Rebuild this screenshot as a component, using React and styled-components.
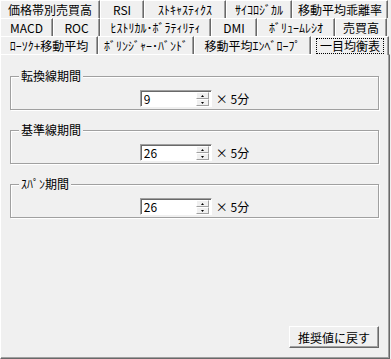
import React, { useState } from 'react';
import styled, { createGlobalStyle } from 'styled-components';

const GlobalStyle = createGlobalStyle`
  html, body {
    margin: 0;
    padding: 0;
    background: #f0f0f0;
  }
  * {
    box-sizing: border-box;
  }
`;

const tabRows = [
  [
    { label: '価格帯別売買高', width: 100 },
    { label: 'RSI', width: 44 },
    { label: 'ｽﾄｷｬｽﾃｨｸｽ', width: 82 },
    { label: 'ｻｲｺﾛｼﾞｶﾙ', width: 66 },
    { label: '移動平均乖離率', width: 96 },
  ],
  [
    { label: 'MACD', width: 53 },
    { label: 'ROC', width: 47 },
    { label: 'ﾋｽﾄﾘｶﾙ･ﾎﾞﾗﾃｨﾘﾃｨ', width: 111 },
    { label: 'DMI', width: 46 },
    { label: 'ﾎﾞﾘｭｰﾑﾚｼｵ', width: 78 },
    { label: '売買高', width: 52 },
  ],
  [
    { label: 'ﾛｰｿｸ+移動平均', width: 98 },
    { label: 'ﾎﾞﾘﾝｼﾞｬｰ･ﾊﾞﾝﾄﾞ', width: 96 },
    { label: '移動平均ｴﾝﾍﾞﾛｰﾌﾟ', width: 117 },
    { label: '一目均衡表', width: 78 },
  ],
];

const periods = [
  { title: '転換線期間', value: 9 },
  { title: '基準線期間', value: 26 },
  { title: 'ｽﾊﾟﾝ期間', value: 26 },
];

const defaults = periods.map(p => p.value);

export default function App() {
  const [selected, setSelected] = useState('一目均衡表');
  const [values, setValues] = useState(defaults);

  const onChangeValue = (index, next) => {
    setValues(prev => prev.map((v, i) => (i === index ? next : v)));
  };

  return (
    <>
      <GlobalStyle />
      <Window>
        <TabControl>
          {tabRows.map((row, r) => (
            <TabRow key={r}>
              {row.map(tab => (
                <Tab
                  key={tab.label}
                  $width={tab.width}
                  $active={tab.label === selected}
                  onClick={() => setSelected(tab.label)}
                >
                  {tab.label === selected ? (
                    <FocusLabel>{tab.label}</FocusLabel>
                  ) : (
                    tab.label
                  )}
                </Tab>
              ))}
            </TabRow>
          ))}
          <Panel>
            <GroupList>
              {periods.map((p, i) => (
                <Group key={p.title}>
                  <GroupTitle>{p.title}</GroupTitle>
                  <SpinRow>
                    <SpinBox>
                      <SpinInput
                        value={values[i]}
                        onChange={e => onChangeValue(i, e.target.value)}
                      />
                      <SpinButtons>
                        <SpinButton onClick={() => onChangeValue(i, Number(values[i]) + 1)}>
                          <Arrow viewBox="0 0 3 2" width="3" height="2">
                            <path d="M0 2 L1.5 0 L3 2 Z" fill="#000" />
                          </Arrow>
                        </SpinButton>
                        <SpinButton onClick={() => onChangeValue(i, Number(values[i]) - 1)}>
                          <Arrow viewBox="0 0 3 2" width="3" height="2">
                            <path d="M0 0 L3 0 L1.5 2 Z" fill="#000" />
                          </Arrow>
                        </SpinButton>
                      </SpinButtons>
                    </SpinBox>
                    <Unit>× 5分</Unit>
                  </SpinRow>
                </Group>
              ))}
            </GroupList>
            <ButtonRow>
              <ResetButton onClick={() => setValues(defaults)}>推奨値に戻す</ResetButton>
            </ButtonRow>
          </Panel>
        </TabControl>
      </Window>
    </>
  );
}

const Window = styled.div`
  width: 391px;
  height: 359px;
  overflow: hidden;
  background: #f0f0f0;
  font-family: 'Noto Sans CJK JP', 'Noto Sans', sans-serif;
  font-size: 12px;
  color: #000;
`;

const TabControl = styled.div`
  display: flex;
  flex-direction: column;
  width: 390px;
  height: 359px;
`;

const TabRow = styled.div`
  display: flex;
  height: 18px;
  position: relative;
  z-index: 1;
`;

const Tab = styled.div`
  display: flex;
  align-items: center;
  justify-content: center;
  width: ${props => props.$width}px;
  height: ${props => (props.$active ? 19 : 18)}px;
  margin-bottom: ${props => (props.$active ? -1 : 0)}px;
  background: #f0f0f0;
  border-top: 1px solid #fff;
  border-left: 1px solid #fff;
  border-right: 1px solid #696969;
  box-shadow: inset -1px 0 0 #a0a0a0;
  white-space: nowrap;
  line-height: 14px;
  cursor: default;
`;

const FocusLabel = styled.span`
  padding: 0 3px;
  outline: 1px dotted #000;
  outline-offset: 0;
  line-height: 14px;
`;

const Panel = styled.div`
  display: flex;
  flex-direction: column;
  flex: 1;
  border-top: 1px solid #fff;
  border-left: 1px solid #fff;
  border-right: 1px solid #696969;
  border-bottom: 1px solid #696969;
  box-shadow: inset -1px -1px 0 #a0a0a0;
  padding: 21px 10px 10px 9px;
`;

const GroupList = styled.div`
  display: flex;
  flex-direction: column;
  gap: 20px;
`;

const Group = styled.div`
  position: relative;
  height: 34px;
  border: 1px solid #a0a0a0;
  box-shadow: 1px 1px 0 #fff, inset 1px 1px 0 #fff;
  padding-top: 13px;
`;

const GroupTitle = styled.span`
  position: absolute;
  top: -9px;
  left: 8px;
  padding: 0 2px;
  background: #f0f0f0;
  line-height: 16px;
`;

const SpinRow = styled.div`
  display: flex;
  align-items: center;
  justify-content: center;
  gap: 4px;
`;

const SpinBox = styled.div`
  display: flex;
  width: 72px;
  height: 17px;
  border-top: 1px solid #a0a0a0;
  border-left: 1px solid #a0a0a0;
  border-right: 1px solid #fff;
  border-bottom: 1px solid #fff;
  box-shadow: inset 1px 1px 0 #696969;
  background: #fff;
  padding: 1px 1px 0 1px;
`;

const SpinInput = styled.input`
  flex: 1;
  min-width: 0;
  border: none;
  outline: none;
  background: transparent;
  padding: 0 2px;
  font-family: 'Noto Sans CJK JP', sans-serif;
  font-size: 12px;
  line-height: 14px;
  height: 14px;
`;

const SpinButtons = styled.div`
  display: flex;
  flex-direction: column;
  width: 13px;
  margin-right: 1px;
`;

const SpinButton = styled.div`
  display: flex;
  align-items: center;
  justify-content: center;
  height: 7px;
  background: #f0f0f0;
  border-top: 1px solid #fff;
  border-left: 1px solid #fff;
  border-right: 1px solid #a0a0a0;
  border-bottom: 1px solid #a0a0a0;
`;

const Arrow = styled.svg`
  display: block;
`;

const Unit = styled.span`
  line-height: 16px;
  white-space: nowrap;
`;

const ButtonRow = styled.div`
  display: flex;
  justify-content: flex-end;
  margin-top: auto;
`;

const ResetButton = styled.button`
  width: 90px;
  height: 22px;
  padding: 0;
  background: #f0f0f0;
  border-top: 1px solid #fff;
  border-left: 1px solid #fff;
  border-right: 1px solid #696969;
  border-bottom: 1px solid #696969;
  box-shadow: inset -1px -1px 0 #a0a0a0;
  font-family: 'Noto Sans CJK JP', sans-serif;
  font-size: 12px;
  color: #000;
`;
